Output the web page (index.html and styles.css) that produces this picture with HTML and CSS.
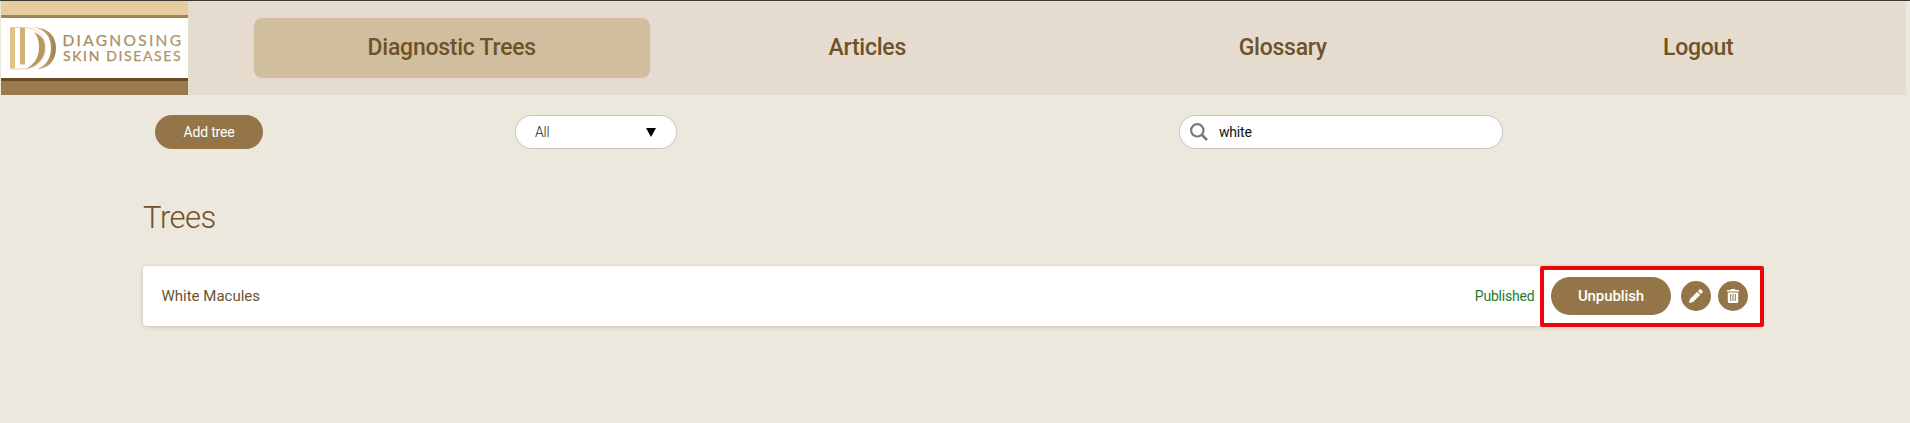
FILE: index.html
```html
<!DOCTYPE html>
<html lang="en">
<head>
<meta charset="utf-8">
<title>Diagnosing Skin Diseases</title>
<link rel="stylesheet" href="styles.css">
</head>
<body>
<header class="header">
  <div class="logo">
    <svg width="187" height="94" viewBox="0 0 187 94" role="img">
      <defs>
        <linearGradient id="gold" x1="0" x2="1" y1="0" y2="0">
          <stop offset="0" stop-color="#dfc084"/><stop offset="1" stop-color="#a07f4f"/>
        </linearGradient>
        <linearGradient id="lettering" gradientUnits="userSpaceOnUse" x1="62" x2="180" y1="0" y2="0">
          <stop offset="0" stop-color="#a58656"/><stop offset="1" stop-color="#b79c6b"/>
        </linearGradient>
      </defs>
      <rect width="187" height="94" fill="#fff"/>
      <rect width="187" height="14" fill="#e6cda0"/>
      <rect y="14" width="187" height="3" fill="#a38552"/>
      <rect y="77" width="187" height="3" fill="#6b4a21"/>
      <rect y="80" width="187" height="14" fill="#997b4e"/>
      <rect x="9" y="26.500" width="5" height="41" fill="#dfc286"/>
      <rect x="19" y="26.500" width="5" height="37" fill="#d0b079"/>
      <path d="M9 26.500H22C37 26.500 44 34 44 47C44 60 36 68 20 68H9" fill="none" stroke="#e2cfa8" stroke-width=".9"/>
      <path d="M33 31C40 34 44 39 44 46C44 56 38 65 25 68C34 63 38 56 38 46C38 39 36 34 33 31Z" fill="#b7965f"/>
      <path d="M32 26.500C47 26 55 35 55 47C55 60 47 68 36 68C45 65 50 57 50 47C50 36 44 28 32 26.500Z" fill="url(#gold)"/>
      <text class="logo-text" x="61.500" y="45" textLength="118.500" font-size="15.500" fill="url(#lettering)">DIAGNOSING</text>
      <text class="logo-text" x="62" y="60" textLength="117.500" font-size="14" fill="url(#lettering)">SKIN DISEASES</text>
    </svg>
  </div>
  <nav class="nav">
    <a class="nav-item active">Diagnostic Trees</a>
    <a class="nav-item">Articles</a>
    <a class="nav-item">Glossary</a>
    <a class="nav-item">Logout</a>
  </nav>
</header>
<main class="page">
  <div class="toolbar">
    <button class="add">Add tree</button>
    <div class="select"><span>All</span><svg width="10" height="9" viewBox="0 0 10 9"><path d="M0 0H10L5 9Z"/></svg></div>
    <div class="search">
      <svg width="18" height="18" viewBox="0 0 18 18" fill="none" stroke="#777"><circle cx="7.300" cy="7.300" r="6.200" stroke-width="2.200"/><path d="M11.700 11.700L17 17" stroke-width="2.600"/></svg>
      <span>white</span>
    </div>
  </div>
  <h1 class="title">Trees</h1>
  <section class="card">
    <span class="name">White Macules</span>
    <span class="status">Published</span>
    <div class="actions">
      <button class="unpublish">Unpublish</button>
      <button class="round" aria-label="Edit"><svg width="14" height="14" viewBox="0 0 14 14" fill="#fff"><path d="M0 14L1 10L8.300 2.700L11.300 5.700L4 13ZM9 2L10.500.600Q11.300-.200 12.100.600L13.400 1.900Q14.200 2.700 13.400 3.500L12 5Z"/></svg></button>
      <button class="round" aria-label="Delete"><svg width="12" height="14" viewBox="0 0 12 14"><path d="M0 1H3.500L4.200 0H7.800L8.500 1H12V2.500H0ZM.800 3.500H11.200V12.500Q11.200 14 9.700 14H2.300Q.800 14 .800 12.500Z" fill="#fff"/><path d="M3.700 5V12M6 5V12M8.300 5V12" stroke="#937548" stroke-width="1"/></svg></button>
    </div>
  </section>
</main>
</body>
</html>
```
FILE: styles.css
```css
* { box-sizing: border-box; }
body { margin: 0; min-height: 423px; background: #ede8dd; border-top: 1px solid #3d3733; font-family: Roboto, "Liberation Sans", sans-serif; color: #6e5228; }
button { border: 0; padding: 0; font-family: inherit; background: #937548; color: #fff; }
svg { display: block; }
.header { display: flex; align-items: center; height: 94px; margin: 0 4px 0 1px; background: #e5dccf; }
.logo { width: 187px; flex: none; }
.logo-text { font-family: Lato, sans-serif; font-weight: 400; stroke: #a98b5b; stroke-width: .25; }
.nav { flex: 1; display: flex; gap: 20px; padding: 0 10px 0 66px; }
.nav-item { flex: 1 1 0; height: 60px; padding-bottom: 1px; border-radius: 8px; display: flex; align-items: center; justify-content: center; font-size: 23px; font-weight: 500; letter-spacing: -.25px; }
.active { background: #d1be9e; }
.page { padding: 20px 148px 0 143px; }
.toolbar { display: flex; align-items: center; padding-left: 12px; }
.add { width: 108px; height: 34px; border-radius: 17px; font-size: 14px; letter-spacing: -.2px; }
.select { display: flex; align-items: center; justify-content: space-between; width: 162px; height: 34px; margin-left: 252px; padding: 0 20px 0 19px; background: #fff; border: 1px solid #c6c6c6; border-radius: 17px; font-size: 14px; font-weight: 300; letter-spacing: -.2px; color: #222; }
.select svg { fill: #000; }
.search { display: flex; align-items: center; gap: 11px; width: 324px; height: 34px; margin-left: 502px; padding-left: 10px; background: #fff; border: 1px solid #c6c6c6; border-radius: 17px; font-size: 14px; letter-spacing: -.2px; color: #111; }
.title { margin: 50px 0 29px; height: 38px; line-height: 38px; font-size: 31px; font-weight: 300; letter-spacing: -.5px; }
.card { display: flex; align-items: center; height: 60px; padding-left: 18.5px; background: #fff; border-radius: 4px; box-shadow: 0 1px 4px rgba(0,0,0,.16); }
.name { font-size: 15px; color: #695335; }
.status { margin-left: auto; margin-right: 5px; font-size: 14px; letter-spacing: -.2px; color: #267a2c; }
.actions { display: flex; align-items: center; flex: none; width: 224px; height: 61px; margin-right: -1.5px; padding-left: 7.5px; border: 4px solid #ee0509; border-radius: 2px; }
.unpublish { width: 120px; height: 38px; border-radius: 19px; font-size: 15px; font-weight: 500; letter-spacing: -.1px; margin-right: 10px; }
.round { width: 30px; height: 30px; border-radius: 50%; margin-right: 7px; display: flex; align-items: center; justify-content: center; }
```
